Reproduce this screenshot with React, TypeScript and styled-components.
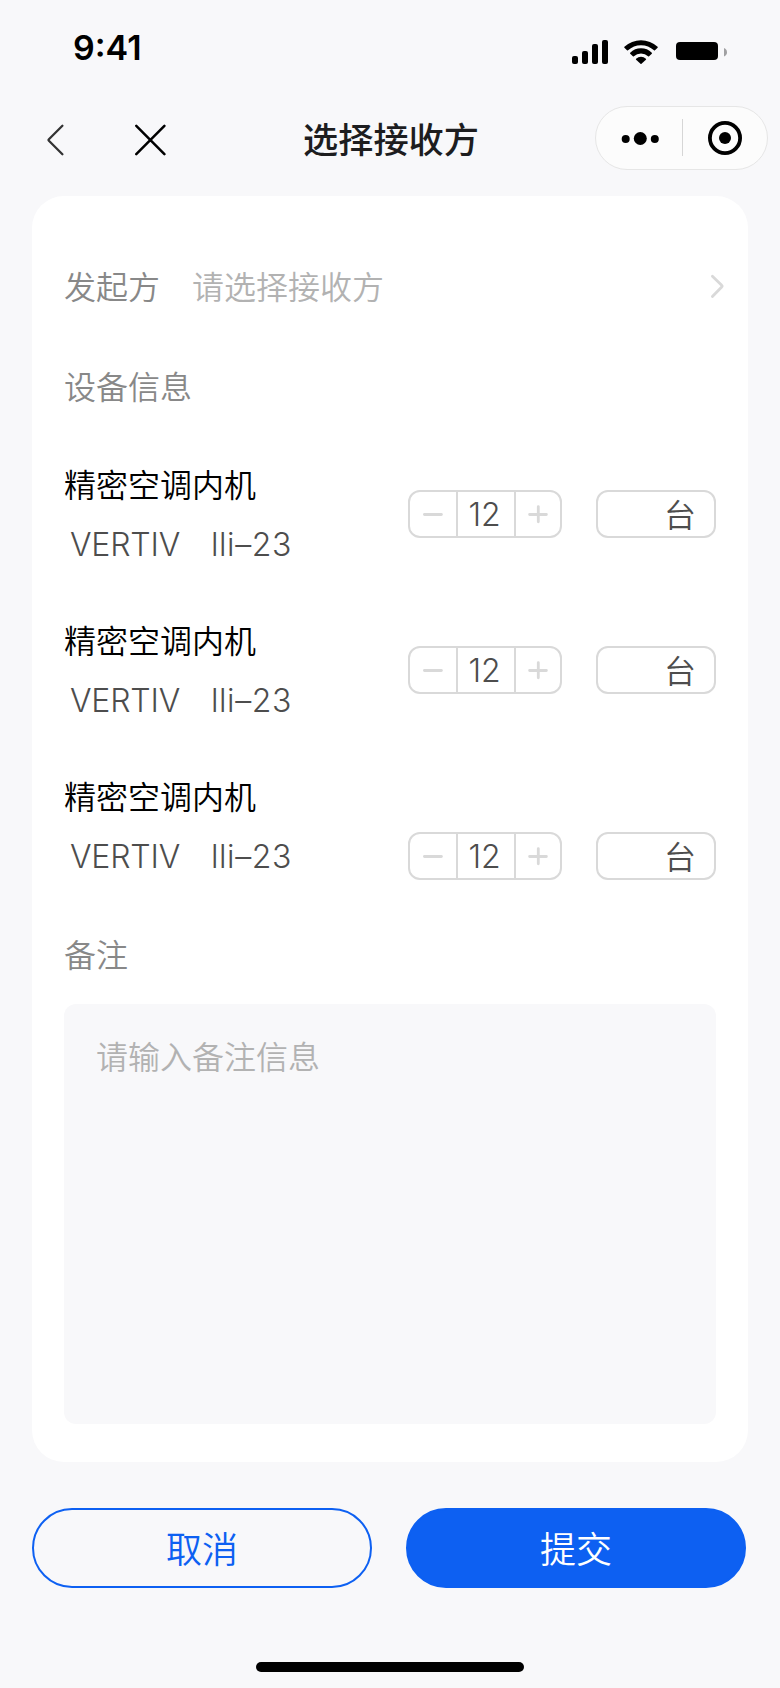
import React from "react";
import styled, { createGlobalStyle } from "styled-components";

const GlobalStyle = createGlobalStyle`
  *, *::before, *::after { box-sizing: border-box; }
  body { margin: 0; background: #f8f8fa; }
  button, textarea { font: inherit; margin: 0; }
`;

const cjk = `"Noto Sans CJK SC", "Noto Sans", sans-serif`;
const latin = `Inter, "Liberation Sans", sans-serif`;

const Screen = styled.div`
  width: 780px;
  height: 1688px;
  display: flex;
  flex-direction: column;
  background: #f8f8fa;
  font-family: ${cjk};
  font-weight: 350;
  font-size: 32px;
  line-height: 48px;
  overflow: hidden;
`;

const StatusBar = styled.header`
  display: flex;
  justify-content: space-between;
  align-items: center;
  height: 96px;
  padding: 0 52px 0 73px;
`;

const Time = styled.time`
  font-family: ${latin};
  font-size: 34px;
  font-weight: 600;
  letter-spacing: 0;
  color: #000;
`;

const StatusIcons = styled.div`
  display: flex;
  align-items: flex-start;
  height: 24px;
  margin-top: 8px;
`;

const NavBar = styled.nav`
  display: grid;
  grid-template-columns: 1fr auto 1fr;
  align-items: center;
  height: 84px;
  padding: 0 12px 0 14px;
`;

const NavActions = styled.div`
  display: flex;
  align-items: center;
  gap: 67px;
  padding: 4px 0 0 30px;
`;

const IconButton = styled.button`
  display: flex;
  padding: 0;
  border: 0;
  background: none;
`;

const Title = styled.h1`
  margin: 0;
  font-size: 35.2px;
  font-weight: 500;
  color: #1d1d1f;
`;

const Capsule = styled.div`
  justify-self: end;
  display: flex;
  align-items: center;
  width: 173px;
  height: 64px;
  border: 1px solid #e6e6e6;
  border-radius: 32px;
  background: #fcfcfc;
`;

const Card = styled.main`
  display: flex;
  flex-direction: column;
  height: 1266px;
  margin: 16px 32px 0;
  padding: 65px 32px 38px;
  border-radius: 32px;
  background: #fff;
`;

const PickerRow = styled.div`
  display: flex;
  align-items: center;
  margin-right: -9px;
`;

const Label = styled.span`
  color: #888;
`;

const Placeholder = styled.span`
  flex: 1;
  margin-left: 32px;
  color: #b2b2b2;
`;

const SectionTitle = styled.h2<{ $top: number }>`
  margin: ${(p) => p.$top}px 0 0;
  font-size: 32px;
  font-weight: 350;
  color: #888;
`;

const DeviceList = styled.ul`
  list-style: none;
  margin: 50px 0 0;
  padding: 0;
`;

const DeviceRow = styled.li<{ $last: boolean }>`
  display: flex;
  justify-content: space-between;
  align-items: ${(p) => (p.$last ? "flex-end" : "center")};
  height: ${(p) => (p.$last ? 109 : 110)}px;
  margin-bottom: ${(p) => (p.$last ? 49 : 46)}px;
`;

const DeviceText = styled.div`
  align-self: flex-start;
`;

const DeviceName = styled.div`
  color: #000;
`;

const DeviceModel = styled.div`
  display: flex;
  gap: 31px;
  margin-top: 18px;
  padding-left: 6px;
  font-family: ${latin};
  line-height: 40px;
  color: #4d4d4d;
`;

const Brand = styled.span`
  letter-spacing: -0.2px;
`;

const ModelCode = styled.span`
  letter-spacing: 0.6px;
`;

const Controls = styled.div`
  display: flex;
  gap: 34px;
`;

const Stepper = styled.div`
  display: grid;
  grid-template-columns: 46px 60px 44px;
  width: 154px;
  height: 48px;
  border: 2px solid #d9d9d9;
  border-radius: 12px;
`;

const StepButton = styled.button`
  display: flex;
  align-items: center;
  justify-content: center;
  padding: 0;
  border: 0;
  background: none;
`;

const StepValue = styled.span`
  padding-right: 3px;
  border: solid #d9d9d9;
  border-width: 0 2px;
  font-family: ${latin};
  line-height: 46px;
  height: 44px;
  text-align: center;
  color: #4d4d4d;
`;

const Unit = styled.div`
  width: 120px;
  height: 48px;
  padding-right: 18px;
  border: 2px solid #d9d9d9;
  border-radius: 12px;
  line-height: 42px;
  text-align: right;
  color: #4d4d4d;
`;

const Remark = styled.textarea`
  display: block;
  flex: 1;
  margin-top: 27px;
  padding: 27px 32px;
  border: 0;
  border-radius: 12px;
  background: #f8f8fa;
  resize: none;
  outline: none;
  &::placeholder { color: #b2b2b2; opacity: 1; }
`;

const Footer = styled.footer`
  display: flex;
  gap: 34px;
  margin: 46px 34px 0 32px;
`;

const ActionButton = styled.button<{ $primary?: boolean }>`
  flex: 1;
  height: 80px;
  padding: 0 0 2px;
  border: 2px solid #0d60f2;
  border-radius: 40px;
  background: ${(p) => (p.$primary ? "#0d60f2" : "transparent")};
  color: ${(p) => (p.$primary ? "#fff" : "#0d60f2")};
  font-size: 36px;
`;

const HomeIndicator = styled.div`
  width: 268px;
  height: 10px;
  margin: 74px auto 0;
  border-radius: 5px;
  background: #000;
`;

const StatusGlyphs = () => (
  <svg width="156" height="24" viewBox="0 0 156 24">
    <rect x="0" y="16" width="6" height="8" rx="2" />
    <rect x="10" y="11" width="6" height="13" rx="2" />
    <rect x="20" y="4" width="6" height="20" rx="2" />
    <rect x="30" y="0" width="6" height="24" rx="2" />
    <g transform="translate(69 0)">
      <path d="M-16.6 6.7A24.5 24.5 0 0 1 16.6 6.7Q17 7.2 16.6 7.7L14 10.3Q13.5 10.7 13 10.3A19 19 0 0 0 -13 10.3Q-13.5 10.7 -14 10.3L-16.6 7.7Q-17 7.2 -16.6 6.7Z" />
      <path d="M-10.8 12.7A15.6 15.6 0 0 1 10.8 12.7Q11.2 13.2 10.8 13.7L8.1 16.3Q7.6 16.7 7.1 16.3A10.3 10.3 0 0 0 -7.1 16.3Q-7.6 16.7 -8.1 16.3L-10.8 13.7Q-11.2 13.2 -10.8 12.7Z" />
      <path d="M-4.9 18.7A7.3 7.3 0 0 1 4.9 18.7Q5.4 19.2 4.9 19.7L.5 23.8Q0 24.2 -.5 23.8L-4.9 19.7Q-5.4 19.2 -4.9 18.7Z" />
    </g>
    <rect x="104" y="2" width="42" height="18" rx="4" />
    <path d="M152 8Q155 9.2 155 12.2T152 16.5Z" fill="#a0a0a2" />
  </svg>
);

const BackIcon = () => (
  <svg width="24" height="36" viewBox="0 0 24 36" fill="none" stroke="#333" strokeWidth="2.3" strokeLinecap="round" strokeLinejoin="round">
    <path d="M18.4 3.7L4.9 17.2Q4.1 18 4.9 18.8L18.4 32.3" />
  </svg>
);

const CloseIcon = () => (
  <svg width="32" height="36" viewBox="0 0 32 36" fill="none" stroke="#000" strokeWidth="2.5" strokeLinecap="round">
    <path d="M1.3 3.8L29.4 32.2M29.4 3.8L1.3 32.2" />
  </svg>
);

const CapsuleGlyphs = () => (
  <svg width="171" height="62" viewBox="0 0 171 62">
    <circle cx="29.7" cy="32" r="4" />
    <circle cx="44.3" cy="31.5" r="6.5" />
    <circle cx="58.8" cy="32" r="4" />
    <rect x="86" y="12" width="1" height="37" fill="#d6d6d6" />
    <circle cx="129" cy="31" r="15.1" fill="none" stroke="#000" strokeWidth="3.8" />
    <circle cx="129" cy="31" r="6" />
  </svg>
);

const StepIcon = ({ plus }: { plus?: boolean }) => (
  <svg width="20" height="20" viewBox="0 0 20 20" stroke="#d9d9d9" strokeWidth="2.8" strokeLinecap="round">
    <path d={plus ? "M1.6 10.5H18.4M10.3 2.6V17.8" : "M1.4 10.5H18.4"} />
  </svg>
);

const ChevronIcon = () => (
  <svg width="18" height="28" viewBox="0 0 18 28" fill="none" stroke="#d9d9d9" strokeWidth="2.8" strokeLinecap="round" strokeLinejoin="round">
    <path d="M5.4 5.2L14.7 14.2Q15.7 15.1 14.7 16L5.4 25.4" />
  </svg>
);

const devices = [
  { name: "精密空调内机", brand: "VERTIV", model: "lli–23", count: 12 },
  { name: "精密空调内机", brand: "VERTIV", model: "lli–23", count: 12 },
  { name: "精密空调内机", brand: "VERTIV", model: "lli–23", count: 12 },
];

export default function App() {
  return (
    <Screen lang="zh-CN">
      <GlobalStyle />
      <StatusBar>
        <Time>9:41</Time>
        <StatusIcons>
          <StatusGlyphs />
        </StatusIcons>
      </StatusBar>
      <NavBar>
        <NavActions>
          <IconButton aria-label="返回"><BackIcon /></IconButton>
          <IconButton aria-label="关闭"><CloseIcon /></IconButton>
        </NavActions>
        <Title>选择接收方</Title>
        <Capsule><CapsuleGlyphs /></Capsule>
      </NavBar>
      <Card>
        <PickerRow>
          <Label>发起方</Label>
          <Placeholder>请选择接收方</Placeholder>
          <ChevronIcon />
        </PickerRow>
        <SectionTitle $top={52}>设备信息</SectionTitle>
        <DeviceList>
          {devices.map((d, i) => (
            <DeviceRow key={i} $last={i === devices.length - 1}>
              <DeviceText>
                <DeviceName>{d.name}</DeviceName>
                <DeviceModel>
                  <Brand>{d.brand}</Brand>
                  <ModelCode>{d.model}</ModelCode>
                </DeviceModel>
              </DeviceText>
              <Controls>
                <Stepper>
                  <StepButton aria-label="减少"><StepIcon /></StepButton>
                  <StepValue>{d.count}</StepValue>
                  <StepButton aria-label="增加"><StepIcon plus /></StepButton>
                </Stepper>
                <Unit>台</Unit>
              </Controls>
            </DeviceRow>
          ))}
        </DeviceList>
        <SectionTitle $top={0}>备注</SectionTitle>
        <Remark placeholder="请输入备注信息" />
      </Card>
      <Footer>
        <ActionButton>取消</ActionButton>
        <ActionButton $primary>提交</ActionButton>
      </Footer>
      <HomeIndicator />
    </Screen>
  );
}
